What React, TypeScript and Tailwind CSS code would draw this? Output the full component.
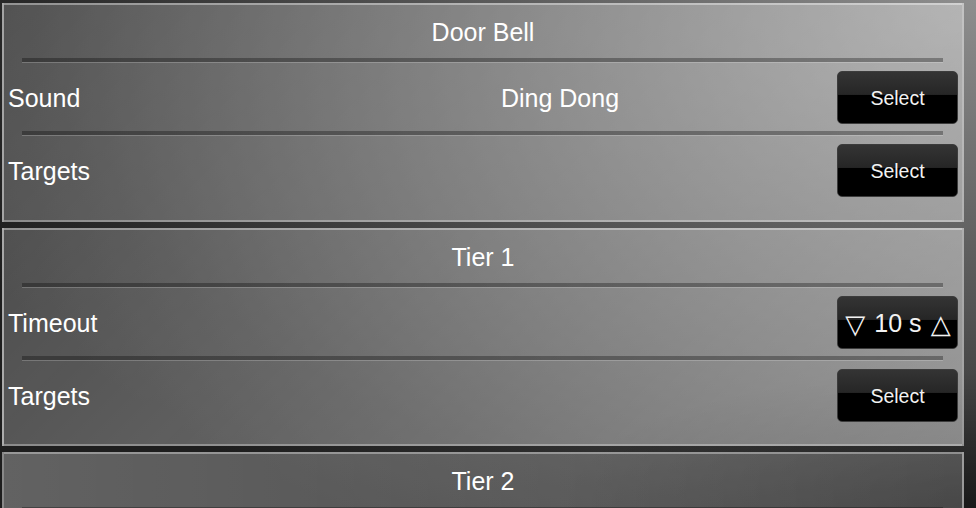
import React from "react";

const Sep = () => (
  <div className="ml-[18px] mr-[19px] h-[5px] mb-[1px] border-t-[4px] border-b-[1px] border-t-black/30 border-b-white/20" />
);

const Btn = ({ children, big }: { children: React.ReactNode; big?: boolean }) => (
  <div
    className={
      "w-[121px] h-[53px] pt-[3px] rounded-[5px] border border-[#3c3c3c] flex items-center justify-center text-[#f2f2f2] bg-[linear-gradient(to_bottom,#343434_0%,#262626_44%,#000_46%,#000_100%)] " +
      (big ? "text-[25px] gap-[9px] pl-[1px]" : "text-[19.5px]")
    }
  >
    {children}
  </div>
);

const Row = ({ label, value, right }: { label: string; value?: string; right?: React.ReactNode }) => (
  <div className="h-[67px] flex items-center pl-[4px] pr-[4px]">
    <div className="w-[275px] pt-[3px] text-[25px] text-white">{label}</div>
    <div className="flex-1 pt-[3px] text-center text-[25px] text-white">{value}</div>
    <div className="w-[121px]">{right}</div>
  </div>
);

const Panel = ({ title, cls, children }: { title: string; cls: string; children?: React.ReactNode }) => (
  <div className={"border-2 border-white/35 flex flex-col shrink-0 " + cls}>
    <div className="h-[53px] pt-[2px] flex items-center justify-center text-[25px] text-white">{title}</div>
    {children}
  </div>
);

const Stepper = () => (
  <Btn big>
    <span className="font-['DejaVu_Sans',sans-serif] text-[26px]">▽</span>
    <span>10 s</span>
    <span className="font-['DejaVu_Sans',sans-serif] text-[26px]">△</span>
  </Btn>
);

export default function App() {
  return (
    <div className="w-[976px] h-[508px] overflow-hidden font-['Liberation_Sans','DejaVu_Sans',Arial,sans-serif] bg-[radial-gradient(ellipse_420px_140px_at_100%_100%,rgba(0,0,0,0.45),rgba(0,0,0,0)),radial-gradient(ellipse_1100px_620px_at_100%_0%,#8e8e8e_0%,#2a2a2a_85%,#1e1e1e_100%)]">
      <div className="pl-[2px] pr-[12px] pt-[3px] flex flex-col gap-[6px]">
        <Panel
          title="Door Bell"
          cls="h-[219px] bg-[linear-gradient(135deg,rgba(255,255,255,0.2),rgba(255,255,255,0.38))]"
        >
          <Sep />
          <Row label="Sound" value="Ding Dong" right={<Btn>Select</Btn>} />
          <Sep />
          <Row label="Targets" right={<Btn>Select</Btn>} />
        </Panel>
        <Panel
          title="Tier 1"
          cls="h-[218px] bg-[linear-gradient(135deg,rgba(255,255,255,0.21),rgba(255,255,255,0.44))]"
        >
          <Sep />
          <Row label="Timeout" right={<Stepper />} />
          <Sep />
          <Row label="Targets" right={<Btn>Select</Btn>} />
        </Panel>
        <Panel
          title="Tier 2"
          cls="h-[218px] bg-[linear-gradient(to_right,rgba(255,255,255,0.3),rgba(255,255,255,0.2))]"
        >
          <Sep />
        </Panel>
      </div>
    </div>
  );
}
